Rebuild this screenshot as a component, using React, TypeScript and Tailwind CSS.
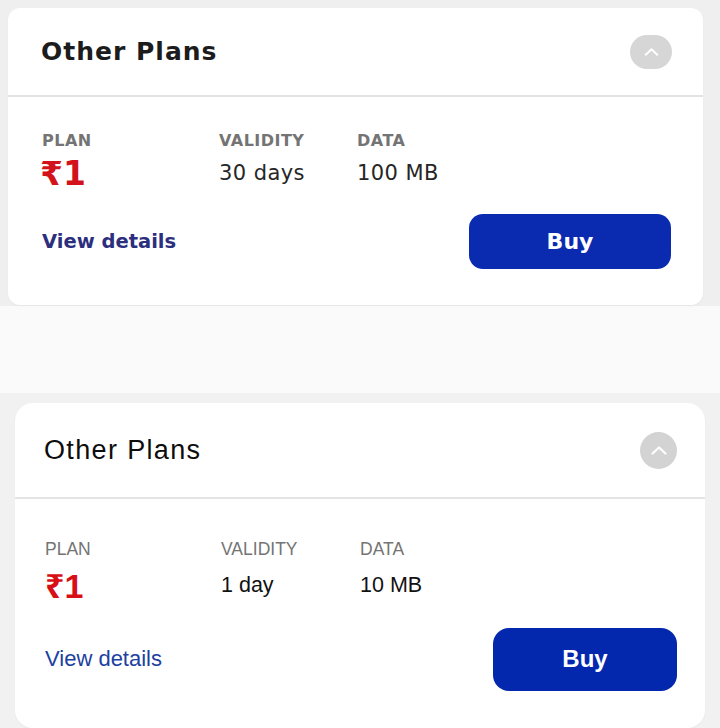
import React from 'react';

interface Plan {
  price: string;
  validity: string;
  data: string;
}

const Chevron: React.FC<{ className?: string }> = ({ className }) => (
  <svg viewBox="0 0 16 9" className={className} fill="none" stroke="#ffffff" strokeWidth={2.2} strokeLinecap="round" strokeLinejoin="round">
    <polyline points="1.5,7.5 8,1.5 14.5,7.5" />
  </svg>
);

// first screenshot: wider, heavier type
const TopCard: React.FC<{ plan: Plan }> = ({ plan }) => (
  <section className="flex h-[297px] w-full flex-col rounded-[12px] bg-white font-['DejaVu_Sans','Noto_Sans',sans-serif] shadow-[0_1px_2px_rgba(0,0,0,0.04)]">
    <header className="flex h-[89px] items-center justify-between border-b-2 border-[#e3e3e3] pl-[33px] pr-[31px]">
      <h2 className="text-[25px] leading-none font-bold tracking-[0.04em] text-[#1c1c1c]">Other Plans</h2>
      <span className="flex h-[34px] w-[42px] items-center justify-center rounded-full bg-[#d6d6d6]">
        <Chevron className="h-[8px] w-[15px]" />
      </span>
    </header>

    <div className="flex flex-1 flex-col pt-[36px] pl-[34px] pr-[32px]">
      <div className="flex">
        <div className="w-[177px]">
          <p className="text-[16px] leading-none font-bold tracking-[0.03em] text-[#747474]">PLAN</p>
          <p className="-ml-[2px] mt-[8px] text-[33px] leading-none font-bold text-[#d3131b]">{plan.price}</p>
        </div>
        <div className="w-[138px]">
          <p className="text-[16px] leading-none font-bold tracking-[0.03em] text-[#747474]">VALIDITY</p>
          <p className="mt-[14px] text-[21px] leading-none tracking-[0.02em] text-[#262626]">{plan.validity}</p>
        </div>
        <div>
          <p className="text-[16px] leading-none font-bold tracking-[0.03em] text-[#747474]">DATA</p>
          <p className="mt-[14px] text-[21px] leading-none tracking-[0.02em] text-[#262626]">{plan.data}</p>
        </div>
      </div>

      <div className="mt-[24px] flex items-center justify-between">
        <a className="text-[19.5px] leading-none font-bold text-[#2c2f7e]">View details</a>
        <button className="h-[55px] w-[202px] rounded-[14px] bg-[#0a2ab0] text-[22px] font-bold text-white">Buy</button>
      </div>
    </div>
  </section>
);

// second screenshot: lighter type, rounder card
const BottomCard: React.FC<{ plan: Plan }> = ({ plan }) => (
  <section className="flex h-[325px] w-full flex-col rounded-[18px] bg-white font-['Liberation_Sans','Noto_Sans',sans-serif] shadow-[0_1px_2px_rgba(0,0,0,0.04)]">
    <header className="flex h-[96px] items-center justify-between border-b-2 border-[#e4e4e4] pl-[29px] pr-[28px]">
      <h2 className="text-[27px] leading-none tracking-[0.05em] text-[#0d0d0d]">Other Plans</h2>
      <span className="flex h-[37px] w-[37px] items-center justify-center rounded-full bg-[#d3d3d3]">
        <Chevron className="h-[9px] w-[16px]" />
      </span>
    </header>

    <div className="flex flex-1 flex-col pt-[42px] pl-[30px] pr-[28px]">
      <div className="flex">
        <div className="w-[176px]">
          <p className="text-[17.5px] leading-none text-[#747474]">PLAN</p>
          <p className="mt-[10px] text-[34px] leading-none font-bold text-[#d80f16]">{plan.price}</p>
        </div>
        <div className="w-[139px]">
          <p className="text-[17.5px] leading-none text-[#747474]">VALIDITY</p>
          <p className="mt-[16px] text-[21.5px] leading-none text-[#111111]">{plan.validity}</p>
        </div>
        <div>
          <p className="text-[17.5px] leading-none text-[#747474]">DATA</p>
          <p className="mt-[16px] text-[21.5px] leading-none text-[#111111]">{plan.data}</p>
        </div>
      </div>

      <div className="mt-[25px] flex items-center justify-between">
        <a className="text-[22px] leading-none text-[#203f9f]">View details</a>
        <button className="h-[63px] w-[184px] rounded-[16px] bg-[#0328ad] text-[24px] font-bold text-white">Buy</button>
      </div>
    </div>
  </section>
);

export default function App() {
  return (
    <div className="h-[728px] w-[720px] overflow-hidden">
      <div className="flex h-[306px] bg-[#efefef] pt-[8px] pl-[8px] pr-[17px]">
        <TopCard plan={{ price: '₹1', validity: '30 days', data: '100 MB' }} />
      </div>
      <div className="h-[87px] bg-[#fafafa]" />
      <div className="flex h-[335px] bg-[#f1f1f1] pt-[10px] pl-[15px] pr-[15px]">
        <BottomCard plan={{ price: '₹1', validity: '1 day', data: '10 MB' }} />
      </div>
    </div>
  );
}
